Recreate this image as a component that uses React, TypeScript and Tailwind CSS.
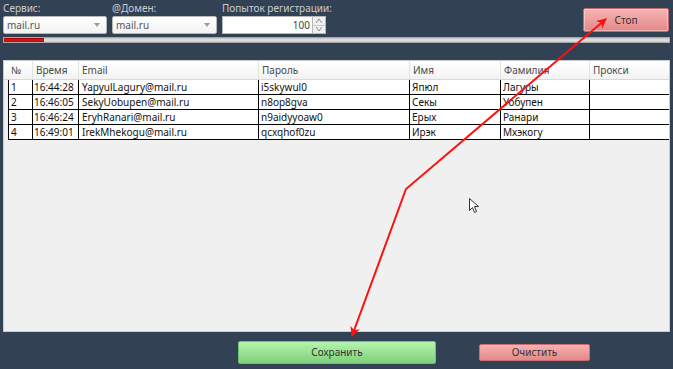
import React from 'react';

const rows = [
  { n: '1', time: '16:44:28', email: 'YapyulLagury@mail.ru', pass: 'i5skywul0', name: 'Япюл', last: 'Лагуры' },
  { n: '2', time: '16:46:05', email: 'SekyUobupen@mail.ru', pass: 'n8op8gva', name: 'Секы', last: 'Уобупен' },
  { n: '3', time: '16:46:24', email: 'EryhRanari@mail.ru', pass: 'n9aidyyoaw0', name: 'Ерых', last: 'Ранари' },
  { n: '4', time: '16:49:01', email: 'IrekMhekogu@mail.ru', pass: 'qcxqhof0zu', name: 'Ирэк', last: 'Мхэкогу' },
];

const cols = [
  { title: '№', w: 'w-[25px]' },
  { title: 'Время', w: 'w-[46px]' },
  { title: 'Email', w: 'w-[180px]' },
  { title: 'Пароль', w: 'w-[151px]' },
  { title: 'Имя', w: 'w-[91px]' },
  { title: 'Фамилия', w: 'w-[89px]' },
];

function Combo({ width }: { width: string }) {
  return (
    <div className={`${width} h-[18px] flex items-center justify-between rounded-[2px] border border-[#b8b8b8] bg-gradient-to-b from-white to-[#f2f2f2] pl-[3px] pr-[6px]`}>
      <span className="text-[10px] text-[#555]">mail.ru</span>
      <svg width="6" height="4" viewBox="0 0 6 4">
        <path d="M0 0 L6 0 L3 4 Z" fill="#9a9a9a" />
      </svg>
    </div>
  );
}

export default function App() {
  return (
    <div className="relative w-[673px] h-[369px] overflow-hidden bg-[#324154] font-['Noto_Sans',sans-serif]">
      {/* top controls */}
      <div className="flex pt-[3px] pl-[3px] pr-[4px]">
        <div className="flex gap-[5px]">
          <div className="flex flex-col">
            <span className="h-[13px] leading-[11px] text-[10px] text-[#c9cdd2]">Сервис:</span>
            <Combo width="w-[104px]" />
          </div>
          <div className="flex flex-col">
            <span className="h-[13px] leading-[11px] text-[10px] text-[#c9cdd2]">@Домен:</span>
            <Combo width="w-[105px]" />
          </div>
          <div className="flex flex-col">
            <span className="h-[13px] leading-[11px] text-[10px] text-[#c9cdd2]">Попыток регистрации:</span>
            <div className="flex h-[18px] w-[104px]">
              <div className="flex-1 flex items-center justify-end border border-[#b8b8b8] bg-white pr-[2px] text-[10px] text-[#444]">
                100
              </div>
              <div className="w-[13px] flex flex-col border-y border-r border-[#b8b8b8] bg-[#f0f0f0]">
                <div className="flex-1 flex items-center justify-center border-b border-[#c8c8c8]">
                  <svg width="6" height="4" viewBox="0 0 6 4"><path d="M0 4 L3 0 L6 4" fill="none" stroke="#8a8a8a" /></svg>
                </div>
                <div className="flex-1 flex items-center justify-center">
                  <svg width="6" height="4" viewBox="0 0 6 4"><path d="M0 0 L3 4 L6 0" fill="none" stroke="#8a8a8a" /></svg>
                </div>
              </div>
            </div>
          </div>
        </div>
        <div className="flex-1" />
        <button className="mt-[5px] w-[86px] h-[24px] rounded-[2px] border border-[#c46a6a] bg-gradient-to-b from-[#f8b4b4] to-[#e38888] text-[10px] text-[#333] shadow-[inset_0_0_0_1px_rgba(255,255,255,0.35)]">
          Стоп
        </button>
      </div>

      {/* progress */}
      <div className="mx-[3px] mt-[3px] h-[6px] bg-gradient-to-b from-[#bdbdbd] via-[#e6e6e6] to-[#c9c9c9] border border-[#a8a8a8] flex">
        <div className="w-[40px] h-full bg-gradient-to-b from-[#a00000] via-[#e01818] to-[#b00808]" />
      </div>

      {/* grid panel */}
      <div className="mx-[3px] mt-[17px] h-[272px] border border-[#c5ccd4] bg-[#f0f0f0] flex flex-col">
        <div className="flex h-[19px] bg-gradient-to-b from-white to-[#f3f3f3] border-b border-[#d8d8d8]">
          <div className="w-[4px]" />
          {cols.map((c) => (
            <div key={c.title} className={`${c.w} border-r border-[#e2e2e2] pl-[3px] text-[10px] leading-[19px] text-[#4a4a4a]`}>
              {c.title}
            </div>
          ))}
          <div className="flex-1 pl-[3px] text-[10px] leading-[19px] text-[#4a4a4a]">Прокси</div>
        </div>
        <div className="ml-[4px] border-l border-black">
          {rows.map((r) => (
            <div key={r.n} className="flex h-[15px] border-b border-black bg-white text-[10px] leading-[14px] text-[#111]">
              <div className="w-[24px] border-r border-black pl-[2px]">{r.n}</div>
              <div className="w-[46px] border-r border-black pl-[1px]">{r.time}</div>
              <div className="w-[180px] border-r border-black pl-[3px]">{r.email}</div>
              <div className="w-[151px] border-r border-black pl-[2px]">{r.pass}</div>
              <div className="w-[91px] border-r border-black pl-[2px]">{r.name}</div>
              <div className="w-[89px] border-r border-black pl-[2px]">{r.last}</div>
              <div className="flex-1" />
            </div>
          ))}
        </div>
      </div>

      {/* bottom buttons */}
      <div className="flex items-center mt-[9px] pl-[238px]">
        <button className="w-[198px] h-[23px] rounded-[2px] border border-[#6cc46c] bg-gradient-to-b from-[#b4f4ac] to-[#7fd07c] text-[10px] text-[#333]">
          Сохранить
        </button>
        <button className="ml-[43px] w-[111px] h-[17px] rounded-[2px] border border-[#c87070] bg-gradient-to-b from-[#f8b0b0] to-[#e28a8a] text-[10px] text-[#333]">
          Очистить
        </button>
      </div>

      {/* annotation arrows + cursor */}
      <svg className="absolute inset-0 pointer-events-none" width="673" height="369" viewBox="0 0 673 369">
        <defs>
          <marker id="ah" viewBox="0 0 10 10" refX="9" refY="5" markerWidth="5" markerHeight="5" orient="auto-start-reverse">
            <path d="M0 0 L10 5 L0 10 L3 5 Z" fill="#ff1010" />
          </marker>
        </defs>
        <polyline
          points="352,336 406,189 606,19"
          fill="none"
          stroke="#ff1010"
          strokeWidth="2"
          markerStart="url(#ah)"
          markerEnd="url(#ah)"
        />
        <path
          d="M469.5 198.5 L469.5 210.5 L472.5 207.5 L474.5 212.5 L476.5 211.5 L474.5 206.5 L478.5 206.5 Z"
          fill="white"
          stroke="#333"
          strokeWidth="1"
        />
      </svg>
    </div>
  );
}
